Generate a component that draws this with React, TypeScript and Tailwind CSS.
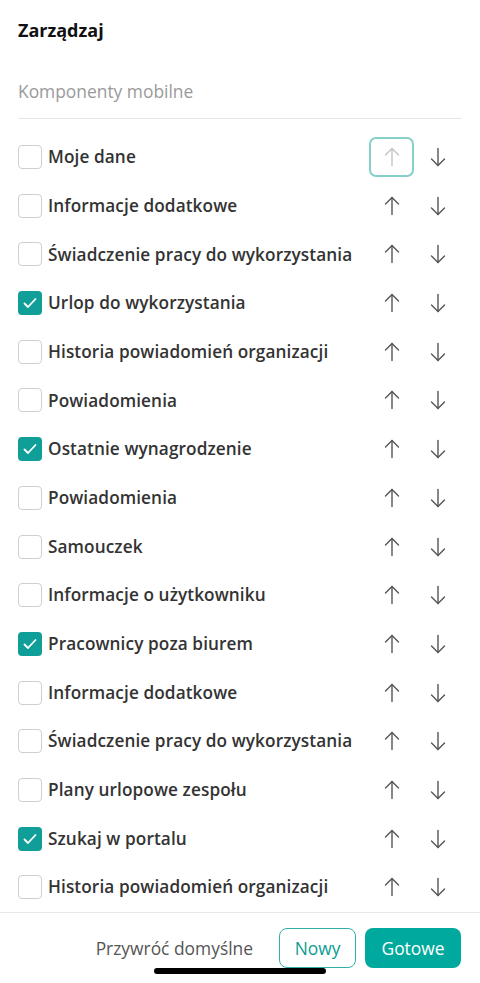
import React from "react";

type Item = { label: string; checked: boolean };

const items: Item[] = [
  { label: "Moje dane", checked: false },
  { label: "Informacje dodatkowe", checked: false },
  { label: "Świadczenie pracy do wykorzystania", checked: false },
  { label: "Urlop do wykorzystania", checked: true },
  { label: "Historia powiadomień organizacji", checked: false },
  { label: "Powiadomienia", checked: false },
  { label: "Ostatnie wynagrodzenie", checked: true },
  { label: "Powiadomienia", checked: false },
  { label: "Samouczek", checked: false },
  { label: "Informacje o użytkowniku", checked: false },
  { label: "Pracownicy poza biurem", checked: true },
  { label: "Informacje dodatkowe", checked: false },
  { label: "Świadczenie pracy do wykorzystania", checked: false },
  { label: "Plany urlopowe zespołu", checked: false },
  { label: "Szukaj w portalu", checked: true },
  { label: "Historia powiadomień organizacji", checked: false },
];

function Arrow({ down, color }: { down?: boolean; color: string }) {
  return (
    <svg
      width="16"
      height="20"
      viewBox="0 0 16 20"
      fill="none"
      stroke={color}
      strokeWidth="1.4"
      strokeLinecap="round"
      strokeLinejoin="round"
      className={down ? "rotate-180" : ""}
    >
      <path d="M8 1.5v17" />
      <path d="M1.5 8 8 1.5 14.5 8" />
    </svg>
  );
}

function Checkbox({ checked }: { checked: boolean }) {
  if (checked) {
    return (
      <div className="w-6 h-6 rounded-[4px] bg-[#109f98] flex items-center justify-center shrink-0">
        <svg width="16" height="16" viewBox="0 0 16 16" fill="none" stroke="#fff" strokeWidth="1.8" strokeLinecap="round" strokeLinejoin="round">
          <path d="M2.5 8.5 6 12l7.5-8" />
        </svg>
      </div>
    );
  }
  return <div className="w-6 h-6 rounded-[4px] border-[1.5px] border-[#cfcfcf] bg-white shrink-0" />;
}

function Row({ item, first }: { item: Item; first: boolean }) {
  return (
    <div className="h-[48.7px] flex items-center pl-[18px] pr-[20px]">
      <Checkbox checked={item.checked} />
      <span className="ml-[6px] flex-1 text-[17.2px] font-semibold text-[#333] tracking-[0.1px] whitespace-nowrap">
        {item.label}
      </span>
      <div className="flex items-center">
        <button
          className={
            first
              ? "w-[45px] h-[40px] flex items-center justify-center rounded-[7px] border-2 border-[#86cfca]"
              : "w-[45px] h-[40px] flex items-center justify-center"
          }
        >
          <Arrow color={first ? "#c4c4c4" : "#555"} />
        </button>
        <button className="w-[45px] h-[40px] flex items-center justify-center ml-[1px]">
          <Arrow down color="#555" />
        </button>
      </div>
    </div>
  );
}

export default function App() {
  return (
    <div className="relative w-[480px] h-[983px] bg-white overflow-hidden font-['Open_Sans',sans-serif]">
      <div className="px-[18px] pt-[16px]">
        <h1 className="text-[18px] font-bold text-[#111] leading-[28px]">Zarządzaj</h1>
        <div className="mt-[35px] text-[17.4px] text-[#9a9a9a] leading-[24px]">Komponenty mobilne</div>
        <div className="mt-[15px] h-px bg-[#e6e6e6]" />
      </div>

      <div className="pt-[13.7px]">
        {items.map((item, i) => (
          <Row key={i} item={item} first={i === 0} />
        ))}
      </div>

      {/* footer actions */}
      <div className="border-t border-[#e8e8e8] flex items-center justify-end pt-[15px] pr-[19px] gap-[9px]">
        <span className="text-[17.4px] text-[#555] mr-[17px]">Przywróć domyślne</span>
        <button className="w-[77px] h-[40px] rounded-[8px] border border-[#2fb1a9] text-[17.4px] text-[#0b9c93]">
          Nowy
        </button>
        <button className="w-[96px] h-[40px] rounded-[8px] bg-[#00a99d] text-[17.4px] text-white">
          Gotowe
        </button>
      </div>

      <div className="absolute left-[154px] top-[968px] w-[172px] h-[6px] rounded-full bg-black" />
    </div>
  );
}
